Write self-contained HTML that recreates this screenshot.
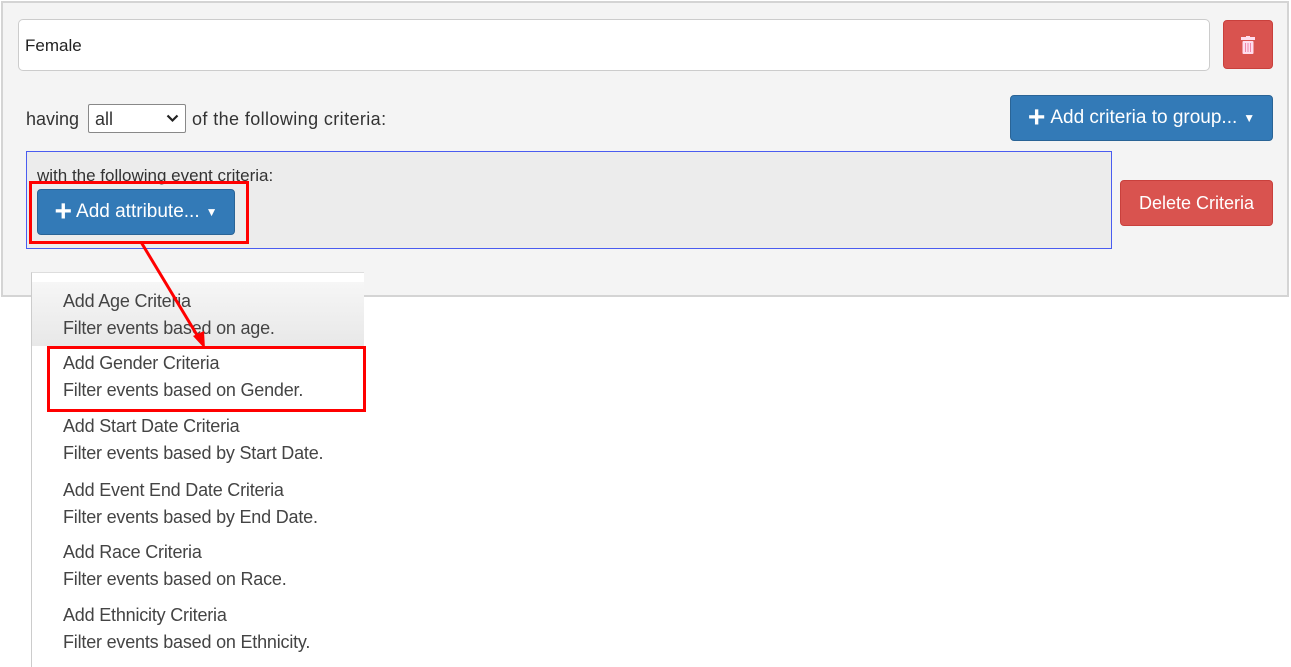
<!DOCTYPE html>
<html><head><style>
body{margin:0;width:1291px;height:667px;background:#fff;position:relative;overflow:hidden;font-family:"Liberation Sans",sans-serif;color:#333;font-size:16px}
.a{position:absolute;box-sizing:border-box}
.btn{color:#fff;border-radius:4px;display:flex;align-items:center;justify-content:center;font-size:18px}
.it{position:absolute;left:63px;font-size:18px;color:#444;white-space:nowrap;line-height:20px;letter-spacing:-0.2px}
</style></head><body>
<div class="a" style="left:1px;top:1px;width:1288px;height:296px;background:#f4f4f4;border:2px solid #d4d4d4"></div>
<div class="a" style="left:18px;top:19px;width:1192px;height:52px;background:#fff;border:1px solid #ccc;border-radius:5px;padding:16px 0 0 6px;font-size:17px;color:#222">Female</div>
<div class="a btn" style="left:1223px;top:20px;width:50px;height:49px;background:#d9534f;border:1px solid #c9403c">
<svg width="14" height="18" viewBox="0 0 14 18"><rect x="0" y="1" width="14" height="3" fill="#fde"/><rect x="5" y="0" width="4" height="2" fill="#fde"/><rect x="1.5" y="5" width="11" height="13" rx="1" fill="#fde"/><path d="M4.5 7v9M7 7v9M9.5 7v9" stroke="#e8a" stroke-width="1"/></svg></div>
<div class="a" style="left:26px;top:109px;font-size:18px">having</div>
<div class="a" style="left:88px;top:104px;width:98px;height:29px;background:#fff;border:1px solid #888;border-radius:2px;padding:4px 0 0 6px;font-size:18px">all
<svg style="position:absolute;right:6px;top:9px" width="13" height="9" viewBox="0 0 13 9"><path d="M1.5 1.5l5 5 5-5" stroke="#222" stroke-width="2.2" fill="none"/></svg></div>
<div class="a" style="left:192px;top:109px;font-size:18px;letter-spacing:0.4px">of the following criteria:</div>
<div class="a btn" style="left:1010px;top:95px;width:263px;height:46px;background:#337ab7;border:1px solid #2a6496;font-size:19px">
<span style="font-size:30px;font-weight:bold;margin-right:5px;line-height:20px">+</span>Add criteria to group...<span style="font-size:12px;margin-left:6px">▼</span></div>
<div class="a" style="left:26px;top:151px;width:1086px;height:98px;background:#ececec;border:1px solid #4a5cf0"></div>
<div class="a" style="left:37px;top:166px;font-size:17px">with the following event criteria:</div>
<div class="a btn" style="left:37px;top:189px;width:198px;height:46px;background:#337ab7;border:1px solid #2a6496;font-size:19px">
<span style="font-size:30px;font-weight:bold;margin-right:4px;line-height:20px">+</span>Add attribute...<span style="font-size:12px;margin-left:6px">▼</span></div>
<div class="a" style="left:29px;top:181px;width:220px;height:63px;border:3px solid #f00"></div>
<div class="a btn" style="left:1120px;top:180px;width:153px;height:46px;background:#d9534f;border:1px solid #c9403c">Delete Criteria</div>
<div class="a" style="left:31px;top:272px;width:333px;height:395px;background:#fff;border-left:1px solid #ccc;border-top:1px solid #ddd"></div>
<div class="a" style="left:32px;top:282px;width:332px;height:64px;background:linear-gradient(#f6f6f6,#e8e8e8)"></div>
<div class="it" style="top:291px">Add Age Criteria</div><div class="it" style="top:318px">Filter events based on age.</div>
<div class="it" style="top:353px">Add Gender Criteria</div><div class="it" style="top:380px">Filter events based on Gender.</div>
<div class="it" style="top:416px">Add Start Date Criteria</div><div class="it" style="top:443px">Filter events based by Start Date.</div>
<div class="it" style="top:480px">Add Event End Date Criteria</div><div class="it" style="top:507px">Filter events based by End Date.</div>
<div class="it" style="top:542px">Add Race Criteria</div><div class="it" style="top:569px">Filter events based on Race.</div>
<div class="it" style="top:605px">Add Ethnicity Criteria</div><div class="it" style="top:632px">Filter events based on Ethnicity.</div>
<div class="a" style="left:47px;top:346px;width:319px;height:66px;border:3px solid #f00"></div>
<svg class="a" style="left:0;top:0" width="1291" height="667"><path d="M141 242L200 340" stroke="#f00" stroke-width="3"/><path d="M205 349L193 336L204 331Z" fill="#f00"/></svg>
</body></html>
